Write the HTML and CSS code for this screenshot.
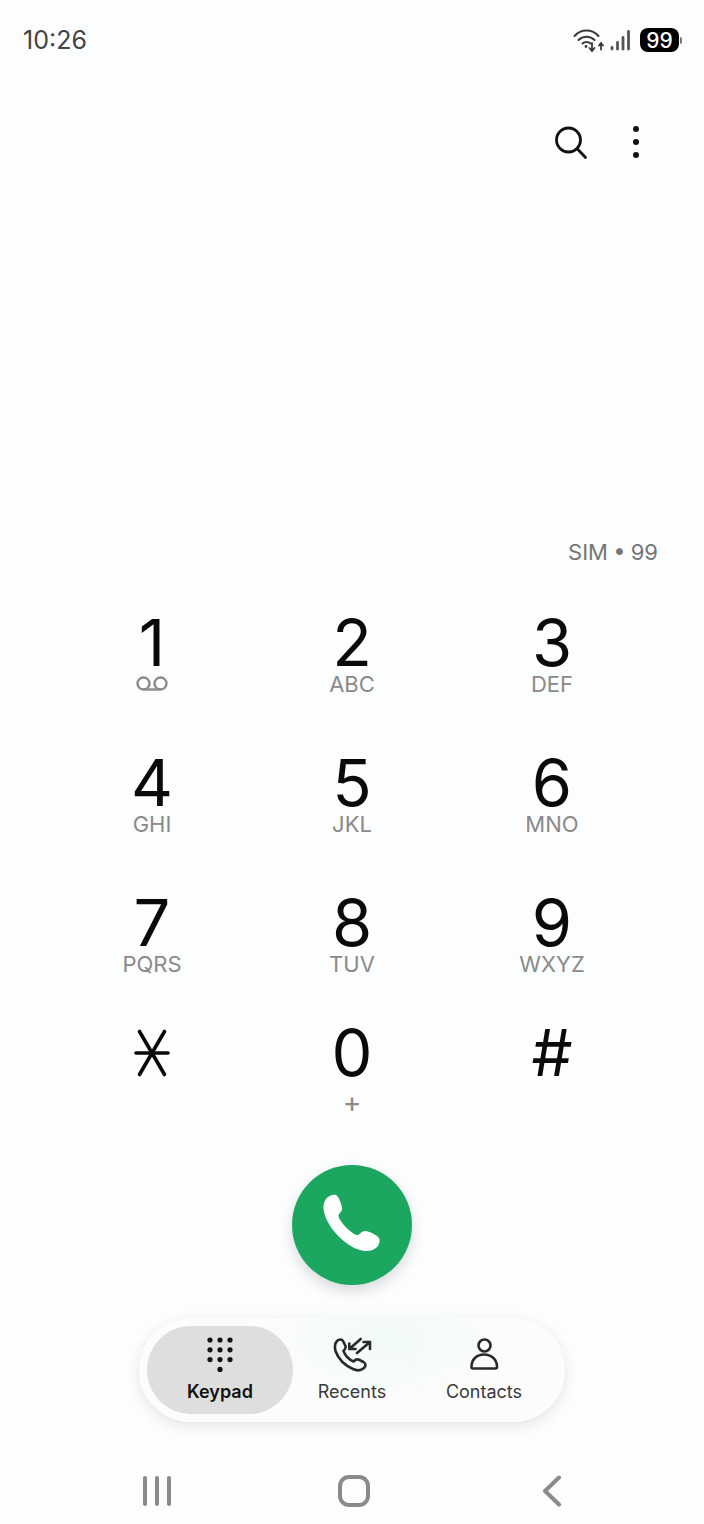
FILE: index.html
```html
<!DOCTYPE html>
<html lang="en">
<head>
  <meta charset="UTF-8"/>
  <meta name="viewport" content="width=device-width, initial-scale=1.0"/>
  <title>Phone</title>
  <link rel="stylesheet" href="styles.css">
</head>
<body>

  <!-- Status bar -->
  <div class="status-bar">
    <span class="time">10:26</span>
    <div class="status-icons">
      <svg class="wifi" width="34" height="26" viewBox="0 0 34 26" fill="none" stroke="#3a3a3a" stroke-linecap="round">
        <path d="M1.500 9C8 1.500 19 1.500 25.500 9" stroke-width="2"/>
        <path d="M5.500 13C10 8.500 17 8.500 21.500 13" stroke-width="2"/>
        <path d="M9.500 16.500C11.500 14.500 15.500 14.500 17.500 16.500" stroke-width="2"/>
        <circle cx="13" cy="19.500" r="1.400" fill="#3a3a3a" stroke="none"/>
        <path d="M19 16V23.500M16.500 21L19 24L21.500 21" stroke-width="1.800"/>
        <path d="M28 22.500V16.500M26 18.500L28 16L30 18.500" stroke-width="1.800"/>
      </svg>
      <svg class="signal" width="22" height="22" viewBox="0 0 22 22" fill="none" stroke="#555" stroke-width="2.800" stroke-linecap="round">
        <path d="M2 20V18.500"/>
        <path d="M7.500 20V13.500"/>
        <path d="M13 20V8.500"/>
        <path d="M18.500 20V2.500"/>
      </svg>
      <div class="battery"><span class="battery-level">99</span></div>
      <span class="battery-cap"></span>
    </div>
  </div>

  <!-- Top actions -->
  <div class="top-actions">
    <svg width="36" height="36" viewBox="0 0 36 36" fill="none" stroke="#111" stroke-width="2.800" stroke-linecap="round">
      <circle cx="17.500" cy="16" r="12"/>
      <path d="M26.500 25L34.500 33.500"/>
    </svg>
    <div class="more-dots"><i></i><i></i><i></i></div>
  </div>

  <!-- Dial area -->
  <main class="dialer">
    <div class="sim-label">SIM • 99</div>

    <div class="keypad">
      <div class="key">
        <span class="digit">1</span>
        <svg class="voicemail" width="32" height="15" viewBox="0 0 32 15" fill="none" stroke="#8a8a8a" stroke-width="2.400">
          <circle cx="7.500" cy="7.500" r="6"/>
          <circle cx="24.500" cy="7.500" r="6"/>
          <path d="M7.500 13.500H24.500"/>
        </svg>
      </div>
      <div class="key"><span class="digit">2</span><span class="letters">ABC</span></div>
      <div class="key"><span class="digit">3</span><span class="letters">DEF</span></div>
      <div class="key"><span class="digit">4</span><span class="letters">GHI</span></div>
      <div class="key"><span class="digit">5</span><span class="letters">JKL</span></div>
      <div class="key"><span class="digit">6</span><span class="letters">MNO</span></div>
      <div class="key"><span class="digit">7</span><span class="letters">PQRS</span></div>
      <div class="key"><span class="digit">8</span><span class="letters">TUV</span></div>
      <div class="key"><span class="digit">9</span><span class="letters">WXYZ</span></div>
      <div class="key key-last">
        <svg class="star" width="36" height="48" viewBox="0 0 36 48" fill="none" stroke="#0a0a0a" stroke-width="3.600" stroke-linecap="round">
          <path d="M5.500 2.500L30.500 45.500"/>
          <path d="M30.500 2.500L5.500 45.500"/>
          <path d="M2 24H34"/>
        </svg>
      </div>
      <div class="key key-last"><span class="digit">0</span><span class="letters plus">+</span></div>
      <div class="key key-last"><span class="digit">#</span></div>
    </div>

    <button class="call-btn">
      <svg width="60" height="62" viewBox="0 0 60 62">
        <path fill="#fff" d="M4 5C6 2 11 0 14 1C16.500 2 19 9 20 13C20.600 16 19 18 17 20C16 21 16.500 23 17.500 25C21 31 26 36 32 40C34 41 36 41.500 37 40.500C39 38.500 41 36.500 44 37C48 38 55 41 57 44C58.500 46.500 57 52 54 54C50 57 44 58 38 56C28 53 18 45 11 36C5 28 1 19 1.500 12C1.700 9 2.500 7 4 5Z"/>
      </svg>
    </button>

    <!-- Bottom tabs -->
    <nav class="tabs">
      <div class="tab tab-active">
        <svg width="30" height="36" viewBox="0 0 30 36" fill="#111">
          <circle cx="5" cy="3" r="2.600"/><circle cx="15" cy="3" r="2.600"/><circle cx="25" cy="3" r="2.600"/>
          <circle cx="5" cy="12.800" r="2.600"/><circle cx="15" cy="12.800" r="2.600"/><circle cx="25" cy="12.800" r="2.600"/>
          <circle cx="5" cy="22.600" r="2.600"/><circle cx="15" cy="22.600" r="2.600"/><circle cx="25" cy="22.600" r="2.600"/>
          <circle cx="15" cy="32.400" r="2.600"/>
        </svg>
        <span>Keypad</span>
      </div>
      <div class="tab">
        <svg width="40" height="36" viewBox="0 0 40 36" fill="none" stroke="#2a2a2a" stroke-width="2.600" stroke-linecap="round" stroke-linejoin="round">
          <path d="M5 4C7 2 10 2 11 4L13.500 9C14 11 13 12.500 11.500 14C13 18 17 22.500 21.500 24.500C23 23 24.500 22 26.500 22.500L31.500 25C34 26.500 34 29 32 31C29 33.500 25 34 21 32C12 28 6 21 3.500 14C2.500 10 3 6 5 4Z"/>
          <path d="M28.700 2L17.300 12M17.300 6.500V12H23.500"/>
          <path d="M25 16L38 5M31.500 5H38V12"/>
        </svg>
        <span>Recents</span>
      </div>
      <div class="tab">
        <svg width="32" height="36" viewBox="0 0 32 36" fill="none" stroke="#2a2a2a" stroke-width="2.600" stroke-linejoin="round">
          <circle cx="16.500" cy="8.500" r="6"/>
          <path d="M3.500 30C3.500 22 9 17.500 16 17.500C23 17.500 29 22 29 30C29 31 28.500 31.500 27.500 31.500H5C4 31.500 3.500 31 3.500 30Z"/>
        </svg>
        <span>Contacts</span>
      </div>
    </nav>
  </main>

  <!-- System nav -->
  <div class="system-nav">
    <div class="recent-apps"><i></i><i></i><i></i></div>
    <div class="home-btn"></div>
    <svg width="20" height="32" viewBox="0 0 20 32" fill="none" stroke="#8a8a8a" stroke-width="4" stroke-linecap="round" stroke-linejoin="round">
      <path d="M17 2.500L3 16L17 29.500"/>
    </svg>
  </div>

</body>
</html>
```

FILE: styles.css
```css
* {
  margin: 0;
  padding: 0;
  box-sizing: border-box;
  font-family: 'Inter', 'Liberation Sans', sans-serif;
}

body {
  width: 704px;
  height: 1524px;
  background: #fcfdfe;
  color: #0a0a0a;
  overflow: hidden;
}

.status-bar {
  display: flex;
  align-items: center;
  justify-content: space-between;
  height: 80px;
  padding: 0 22px 0 23px;
}

.time {
  font-size: 25px;
  color: #444;
}

.status-icons {
  display: flex;
  align-items: center;
}

.wifi {
  margin-right: 3px;
}

.signal {
  margin-right: 8px;
}

.battery {
  display: flex;
  align-items: center;
  justify-content: center;
  width: 39px;
  height: 24px;
  background: #000;
  border-radius: 8px;
}

.battery-level {
  font-size: 21px;
  font-weight: 500;
  color: #fff;
}

.battery-cap {
  width: 2px;
  height: 7px;
  margin-left: 1px;
  background: #777;
  border-radius: 0 2px 2px 0;
}

.top-actions {
  display: flex;
  align-items: center;
  justify-content: flex-end;
  gap: 46px;
  height: 64px;
  margin-top: 30px;
  padding-right: 65px;
}

.more-dots {
  display: flex;
  flex-direction: column;
  gap: 7px;
}

.more-dots i {
  display: block;
  width: 6px;
  height: 6px;
  background: #111;
  border-radius: 50%;
}

.dialer {
  display: flex;
  flex-direction: column;
  align-items: center;
}

.sim-label {
  align-self: flex-end;
  margin-top: 364px;
  padding-right: 46px;
  font-size: 22px;
  line-height: 28px;
  word-spacing: -1px;
  color: #757575;
}

.keypad {
  display: grid;
  grid-template-columns: repeat(3, 200px);
  grid-auto-rows: 140px;
  margin-top: 49px;
}

.key {
  display: flex;
  flex-direction: column;
  align-items: center;
}

.key-last {
  margin-top: -10px;
}

.digit {
  height: 56px;
  font-size: 65px;
  line-height: 56px;
  color: #0a0a0a;
}

.letters {
  font-size: 22px;
  line-height: 26px;
  color: #8a8a8a;
}

.plus {
  margin-top: 8px;
  font-size: 28px;
}

.voicemail {
  margin-top: 5px;
}

.star {
  margin-top: 4px;
}

.call-btn {
  display: flex;
  align-items: center;
  justify-content: center;
  width: 120px;
  height: 120px;
  margin-top: -10px;
  background: #1ca760;
  border: none;
  border-radius: 50%;
  box-shadow: 0 6px 14px rgba(0, 0, 0, 0.14);
}

.tabs {
  display: flex;
  align-items: center;
  width: 426px;
  height: 104px;
  margin-top: 33px;
  padding: 0 15px 0 8px;
  background: radial-gradient(ellipse 130px 60px at 58% 20%, #f1faf6, #fbfcfb);
  border-radius: 52px;
  box-shadow: 0 4px 14px rgba(0, 0, 0, 0.1);
}

.tab {
  display: flex;
  flex-direction: column;
  align-items: center;
  justify-content: center;
  gap: 8px;
  flex: 1;
  height: 88px;
  border-radius: 44px;
  font-size: 18px;
  color: #3a3a3a;
}

.tab span {
  line-height: 22px;
}

.tab-active {
  flex: none;
  width: 146px;
  margin-right: -7px;
  background: #dedede;
  color: #111;
  font-weight: 600;
}

.system-nav {
  display: flex;
  align-items: center;
  justify-content: space-between;
  margin-top: 53px;
  padding: 0 142px 0 143px;
}

.recent-apps {
  display: flex;
  gap: 8px;
}

.recent-apps i {
  display: block;
  width: 4px;
  height: 30px;
  background: #8a8a8a;
  border-radius: 2px;
}

.home-btn {
  width: 32px;
  height: 32px;
  margin-right: 5px;
  border: 4px solid #8a8a8a;
  border-radius: 11px;
}
```
